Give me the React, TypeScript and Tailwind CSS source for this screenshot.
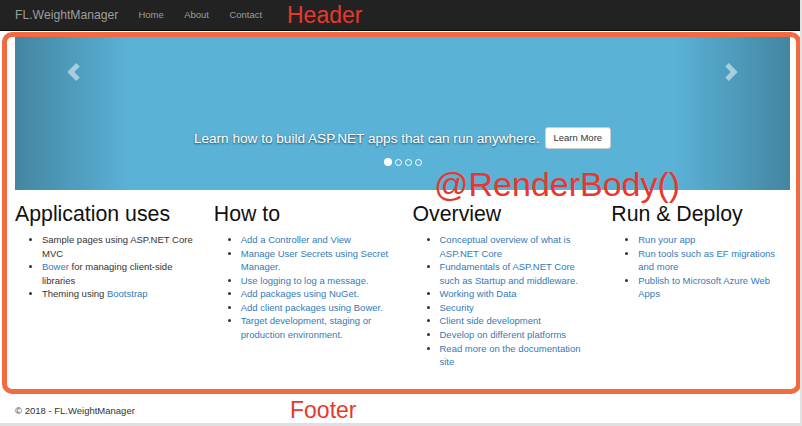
const columns = [
  {
    title: "Application uses",
    items: [
      [{ text: "Sample pages using ASP.NET Core MVC" }],
      [{ text: "Bower", link: true }, { text: " for managing client-side libraries" }],
      [{ text: "Theming using " }, { text: "Bootstrap", link: true }],
    ],
  },
  {
    title: "How to",
    items: [
      [{ text: "Add a Controller and View", link: true }],
      [{ text: "Manage User Secrets using Secret Manager.", link: true }],
      [{ text: "Use logging to log a message.", link: true }],
      [{ text: "Add packages using NuGet.", link: true }],
      [{ text: "Add client packages using Bower.", link: true }],
      [{ text: "Target development, staging or production environment.", link: true }],
    ],
  },
  {
    title: "Overview",
    items: [
      [{ text: "Conceptual overview of what is ASP.NET Core", link: true }],
      [{ text: "Fundamentals of ASP.NET Core such as Startup and middleware.", link: true }],
      [{ text: "Working with Data", link: true }],
      [{ text: "Security", link: true }],
      [{ text: "Client side development", link: true }],
      [{ text: "Develop on different platforms", link: true }],
      [{ text: "Read more on the documentation site", link: true }],
    ],
  },
  {
    title: "Run & Deploy",
    items: [
      [{ text: "Run your app", link: true }],
      [{ text: "Run tools such as EF migrations and more", link: true }],
      [{ text: "Publish to Microsoft Azure Web Apps", link: true }],
    ],
  },
];

function Chevron({ dir }: { dir: "left" | "right" }) {
  const points =
    dir === "left"
      ? "9,0 12.5,3.5 7,9 12.5,14.5 9,18 0,9"
      : "3.5,0 0,3.5 5.5,9 0,14.5 3.5,18 12.5,9";
  return (
    <svg width="13" height="18" viewBox="0 0 12.5 18" className="block">
      <polygon points={points} fill="currentColor" />
    </svg>
  );
}

function Carousel() {
  return (
    <div className="relative w-[775px] h-[153px] bg-[#5ab2d7] overflow-hidden">
      {/* left control */}
      <div className="absolute left-0 top-0 h-full w-[15%] bg-gradient-to-r from-black/25 to-transparent">
        <div className="flex justify-center pt-[26px] text-white/50">
          <Chevron dir="left" />
        </div>
      </div>
      {/* right control */}
      <div className="absolute right-0 top-0 h-full w-[15%] bg-gradient-to-l from-black/25 to-transparent">
        <div className="flex justify-center pt-[26px] text-white/50">
          <Chevron dir="right" />
        </div>
      </div>

      <div className="absolute left-[15%] right-[15%] top-[90px] flex items-center justify-center gap-[5px]">
        <p className="text-[13.6px] leading-[19px] text-white [text-shadow:0_1px_2px_rgba(0,0,0,0.6)]">
          Learn how to build ASP.NET apps that can run anywhere.
        </p>
        <button className="h-[22px] px-[8px] rounded-[3px] bg-white border border-[#ccc] text-[9.5px] text-[#333]">
          Learn More
        </button>
      </div>

      <div className="absolute left-0 right-0 top-[121px] flex justify-center items-center gap-[3px]">
        <span className="w-[8px] h-[8px] rounded-full bg-white" />
        <span className="w-[7px] h-[7px] rounded-full border border-white" />
        <span className="w-[7px] h-[7px] rounded-full border border-white" />
        <span className="w-[7px] h-[7px] rounded-full border border-white" />
      </div>
    </div>
  );
}

export default function App() {
  return (
    <div className="relative w-[802px] h-[426px] overflow-hidden bg-white flex flex-col border-r-2 border-[#e2e2e2] font-['Liberation_Sans',Arial,sans-serif] text-[#333]">
      {/* Navbar */}
      <header className="h-[31px] shrink-0 bg-[#222] border-b border-[#080808] flex items-center px-[15px]">
        <span className="text-[12.2px] text-[#9d9d9d]">FL.WeightManager</span>
        <nav className="ml-[20px] flex gap-[20.4px] text-[9.5px] text-[#9d9d9d]">
          <a>Home</a>
          <a>About</a>
          <a>Contact</a>
        </nav>
      </header>

      {/* Body */}
      <main className="flex-1 px-[15px] pt-[6px]">
        <Carousel />
        <div className="w-[775px]">
          <div className="-mx-[10px] grid grid-cols-4">
            {columns.map((col) => (
              <div key={col.title} className="px-[10px]">
                <h2 className="mt-[13px] mb-[6.5px] text-[21.3px] leading-[1.1] text-[#111]">
                  {col.title}
                </h2>
                <ul className="list-disc pl-[27px] text-[9.5px] leading-[13.6px]">
                  {col.items.map((parts, i) => (
                    <li key={i}>
                      {parts.map((p, j) =>
                        p.link ? (
                          <a key={j} className="text-[#337ab7]">
                            {p.text}
                          </a>
                        ) : (
                          <span key={j}>{p.text}</span>
                        )
                      )}
                    </li>
                  ))}
                </ul>
              </div>
            ))}
          </div>
        </div>
      </main>

      {/* Footer */}
      <footer className="px-[15px] pb-[5px] text-[9.5px] leading-[13.6px]">
        <p>&copy; 2018 - FL.WeightManager</p>
      </footer>
      <div className="h-[3px] shrink-0 bg-[#e0e0e0]" />

      {/* Annotations drawn over the screenshot */}
      <div className="pointer-events-none absolute left-[2px] top-[32px] w-[799px] h-[362px] border-[5px] border-[#f26a3f] rounded-[10px]" />
      <span className="pointer-events-none absolute left-[287px] top-[4px] text-[23px] leading-none text-[#e8382d]">
        Header
      </span>
      <span className="pointer-events-none absolute left-[434px] top-[167px] text-[34px] leading-none text-[#e8382d]">
        @RenderBody()
      </span>
      <span className="pointer-events-none absolute left-[290px] top-[399px] text-[23px] leading-none text-[#e8382d]">
        Footer
      </span>
    </div>
  );
}
